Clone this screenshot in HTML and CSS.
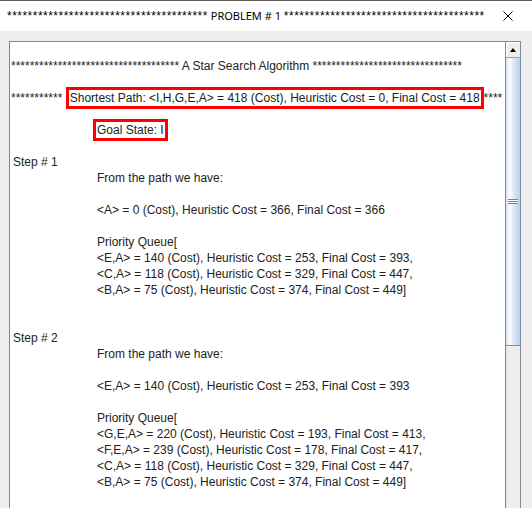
FILE: index.html
```html
<!DOCTYPE html>
<html>
<head>
<meta charset="utf-8">
<title>PROBLEM # 1</title>
<link rel="stylesheet" href="styles.css">
</head>
<body>
<div class="window">
  <div class="titlebar">
    <div class="title"><span class="tstars">**********</span><span class="tstars">**********</span><span class="tstars">**********</span><span class="tstars">*********</span> <span class="tname">PROBLEM # 1</span> <span class="tstars">**********</span><span class="tstars">**********</span><span class="tstars">**********</span><span class="tstars">*********</span></div>
    <svg class="close" width="10" height="10" viewBox="0 0 10 10"><path d="M0.5 0.5 L9.5 9.5 M9.5 0.5 L0.5 9.5" stroke="#000" stroke-width="1" fill="none"/></svg>
  </div>
  <div class="client">
    <div class="scrollpane">
      <div class="viewport">
        <div class="doc">
          <div class="line">************************************ A Star Search Algorithm ********************************</div>
          <div class="blank"></div>
          <div class="line">*********** <span class="box">Shortest Path: &lt;I,H,G,E,A&gt; = 418 (Cost), Heuristic Cost = 0, Final Cost = 418</span>****</div>
          <div class="blank"></div>
          <div class="line goal"><span class="box">Goal State: I</span></div>
          <div class="blank"></div>
          <div class="line step">Step # 1</div>
          <div class="line indent">From the path we have:</div>
          <div class="blank"></div>
          <div class="line indent">&lt;A&gt; = 0 (Cost), Heuristic Cost = 366, Final Cost = 366</div>
          <div class="blank"></div>
          <div class="line indent">Priority Queue[</div>
          <div class="line indent">&lt;E,A&gt; = 140 (Cost), Heuristic Cost = 253, Final Cost = 393,</div>
          <div class="line indent">&lt;C,A&gt; = 118 (Cost), Heuristic Cost = 329, Final Cost = 447,</div>
          <div class="line indent">&lt;B,A&gt; = 75 (Cost), Heuristic Cost = 374, Final Cost = 449]</div>
          <div class="blank"></div>
          <div class="blank"></div>
          <div class="line step">Step # 2</div>
          <div class="line indent">From the path we have:</div>
          <div class="blank"></div>
          <div class="line indent">&lt;E,A&gt; = 140 (Cost), Heuristic Cost = 253, Final Cost = 393</div>
          <div class="blank"></div>
          <div class="line indent">Priority Queue[</div>
          <div class="line indent">&lt;G,E,A&gt; = 220 (Cost), Heuristic Cost = 193, Final Cost = 413,</div>
          <div class="line indent">&lt;F,E,A&gt; = 239 (Cost), Heuristic Cost = 178, Final Cost = 417,</div>
          <div class="line indent">&lt;C,A&gt; = 118 (Cost), Heuristic Cost = 329, Final Cost = 447,</div>
          <div class="line indent">&lt;B,A&gt; = 75 (Cost), Heuristic Cost = 374, Final Cost = 449]</div>
          <div class="blank"></div>
        </div>
      </div>
      <div class="vbar">
        <div class="up"><span class="tri"></span></div>
        <div class="thumb"><span class="grip"></span></div>
        <div class="track"></div>
      </div>
    </div>
  </div>
</div>
</body>
</html>
```

FILE: styles.css
```css
html, body {
  margin: 0;
  padding: 0;
}
body {
  width: 532px;
  height: 508px;
  overflow: hidden;
  background: #eeeeee;
}
.window {
  display: flex;
  flex-direction: column;
  height: 508px;
}
.titlebar {
  box-sizing: border-box;
  height: 31px;
  border-top: 1px solid #5c5c5c;
  background: #ffffff;
  display: flex;
  align-items: center;
  padding-left: 7px;
  flex: none;
}
.title {
  white-space: pre;
  color: #000;
  font-family: "Noto Sans", "Open Sans", sans-serif;
  font-size: 11px;
  line-height: 16px;
}
.tstars {
  font-family: "Liberation Sans", Arial, sans-serif;
  font-size: 12px;
  letter-spacing: 0.48px;
}
.tname {
  font-family: "Noto Sans", "Open Sans", sans-serif;
  font-size: 11px;
}
.close {
  margin-left: auto;
  margin-right: 19px;
  display: block;
}
.client {
  flex: 1;
  padding: 10px 11px 0 9px;
  overflow: hidden;
}
.scrollpane {
  display: flex;
  height: 520px;
  border-top: 1px solid #7a8a99;
  border-left: 1px solid #7a8a99;
}
.viewport {
  flex: 1;
  min-width: 0;
  background: #ffffff;
  overflow: hidden;
  padding-top: 16px;
}
.doc {
  padding-left: 1px;
  font-family: "Liberation Sans", Arial, sans-serif;
  font-size: 12px;
  line-height: 16px;
  color: #222222;
}
.line {
  height: 16px;
  white-space: pre;
}
.blank {
  height: 16px;
}
.step {
  padding-left: 2px;
}
.indent {
  padding-left: 86px;
}
.goal {
  padding-left: 82px;
}
.box {
  border: 3px solid #ff0000;
  padding: 1px 1px;
}
.vbar {
  box-sizing: border-box;
  width: 16px;
  flex: none;
  border-left: 1px solid #7a8a99;
  border-right: 1px solid #7a8a99;
  display: flex;
  flex-direction: column;
  background: #eeeeee;
}
.up {
  height: 15px;
  flex: none;
  background: #eeeeee;
  box-shadow: inset 1px 1px 0 #ffffff;
  display: flex;
  align-items: center;
  justify-content: center;
}
.tri {
  width: 0;
  height: 0;
  border-left: 3.5px solid transparent;
  border-right: 3.5px solid transparent;
  border-bottom: 4px solid #000000;
}
.thumb {
  box-sizing: border-box;
  height: 289px;
  flex: none;
  border-top: 1px solid #8aa2cf;
  border-bottom: 1px solid #6f8cc4;
  background: linear-gradient(to right, #d3e1f1 0%, #ffffff 28%, #e6eef8 45%, #c9daee 80%, #bcd1ea 100%);
  display: flex;
  align-items: center;
  justify-content: center;
}
.grip {
  width: 10px;
  height: 5px;
  background: repeating-linear-gradient(to bottom, #6382bf 0 1px, #ffffff 1px 2px);
}
.track {
  flex: 1;
  background: #eeeeee;
  box-shadow: inset 1px 0 0 #e4e4e4;
}
```
